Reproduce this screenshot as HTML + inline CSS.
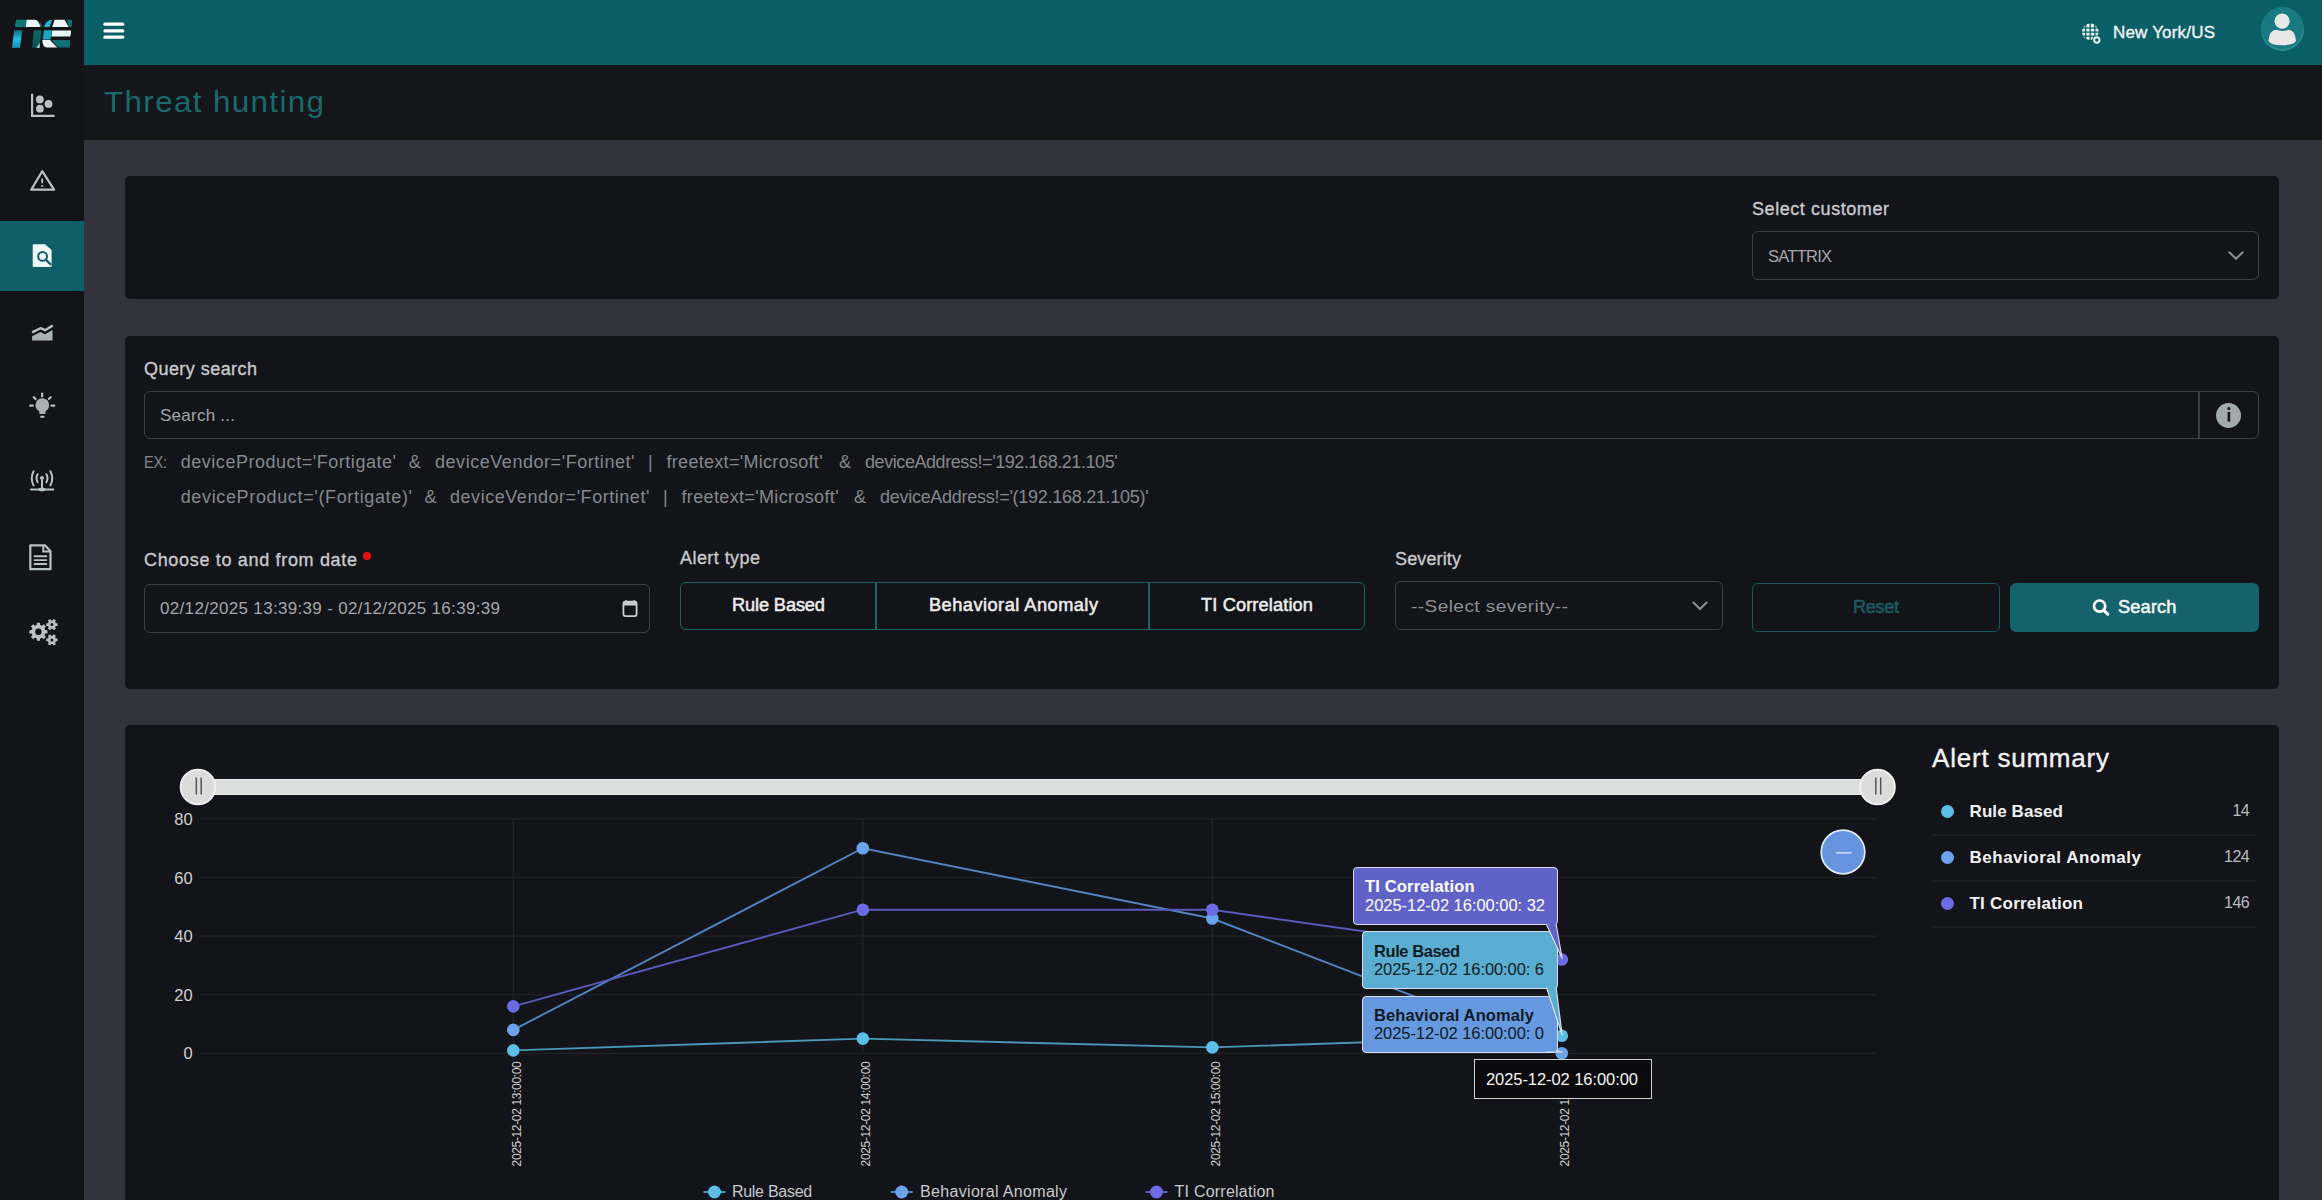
<!DOCTYPE html>
<html><head><meta charset="utf-8"><style>
html,body{margin:0;padding:0;width:2322px;height:1200px;overflow:hidden;background:#33333d;font-family:"Liberation Sans", sans-serif;}
.b{position:absolute;}
.t{position:absolute;white-space:pre;line-height:1;}
svg{position:absolute;left:0;top:0;}
</style></head><body>
<div class="b" style="left:0px;top:0px;width:84px;height:1200px;background:#131418"></div><div class="b" style="left:84px;top:0px;width:2238px;height:65px;background:#0a5f66"></div><div class="b" style="left:84px;top:65px;width:2238px;height:75px;background:#15161b"></div><div class="b" style="left:0px;top:221px;width:84px;height:70px;background:#0f5f68"></div><div class="b" style="left:125px;top:176px;width:2154px;height:123px;background:#131419;border-radius:5px"></div><div class="b" style="left:125px;top:336px;width:2154px;height:353px;background:#131419;border-radius:5px"></div><div class="b" style="left:125px;top:725px;width:2154px;height:495px;background:#131419;border-radius:5px"></div><div class="t" style="left:104px;top:88.05px;font-size:29px;color:#186a6b;letter-spacing:1.284px;transform:scaleX(1.08);transform-origin:0 0;">Threat hunting</div><div class="t" style="left:2113px;top:23.61px;font-size:17px;color:#f2f5f5;letter-spacing:0.183px;-webkit-text-stroke:0.35px currentColor;">New York/US</div><div class="b" style="left:2261px;top:8px;width:43px;height:43px;background:#2a8a90;border-radius:50%"></div><div class="t" style="left:1752px;top:199.76px;font-size:18px;color:#c8c9cb;letter-spacing:0.567px;-webkit-text-stroke:0.35px currentColor;">Select customer</div><div class="b" style="left:1752px;top:231px;width:507px;height:49px;border:1.5px solid #3b3e45;border-radius:6px;box-sizing:border-box"></div><div class="t" style="left:1768px;top:248.03px;font-size:16.5px;color:#a3a7ab;letter-spacing:-0.742px;">SATTRIX</div><div class="t" style="left:144px;top:359.76px;font-size:18px;color:#c8c9cb;letter-spacing:0.450px;-webkit-text-stroke:0.35px currentColor;">Query search</div><div class="b" style="left:144px;top:391px;width:2115px;height:48px;border:1.5px solid #3b3e45;border-radius:6px;box-sizing:border-box"></div><div class="b" style="left:2198px;top:391px;width:1.5px;height:48px;background:#3b3e45"></div><div class="t" style="left:160px;top:406.61px;font-size:17px;color:#a2a5a9;letter-spacing:0.248px;">Search ...</div><div class="b" style="left:2216px;top:403px;width:25px;height:25px;border-radius:50%;background:#a2aaae"></div><div class="t" style="left:144px;top:453.61px;font-size:17px;color:#85888c;letter-spacing:-0.331px;transform:scaleX(0.86);transform-origin:0 0;">EX:</div><div class="t" style="left:180.7px;top:452.76px;font-size:18px;color:#85888c;letter-spacing:0.534px;">deviceProduct='Fortigate'</div><div class="t" style="left:408.7px;top:452.76px;font-size:18px;color:#85888c;letter-spacing:1.684px;">&amp;</div><div class="t" style="left:435px;top:452.76px;font-size:18px;color:#85888c;letter-spacing:0.545px;">deviceVendor='Fortinet'</div><div class="t" style="left:648px;top:452.76px;font-size:18px;color:#85888c;">|</div><div class="t" style="left:666.5px;top:452.76px;font-size:18px;color:#85888c;letter-spacing:0.298px;">freetext='Microsoft'</div><div class="t" style="left:839px;top:452.76px;font-size:18px;color:#85888c;letter-spacing:-0.016px;">&amp;</div><div class="t" style="left:865px;top:452.76px;font-size:18px;color:#85888c;letter-spacing:-0.429px;">deviceAddress!='192.168.21.105'</div><div class="t" style="left:180.7px;top:487.76px;font-size:18px;color:#85888c;letter-spacing:0.647px;">deviceProduct='(Fortigate)'</div><div class="t" style="left:424.6px;top:487.76px;font-size:18px;color:#85888c;letter-spacing:0.384px;">&amp;</div><div class="t" style="left:450px;top:487.76px;font-size:18px;color:#85888c;letter-spacing:0.541px;">deviceVendor='Fortinet'</div><div class="t" style="left:663px;top:487.76px;font-size:18px;color:#85888c;">|</div><div class="t" style="left:681.5px;top:487.76px;font-size:18px;color:#85888c;letter-spacing:0.351px;">freetext='Microsoft'</div><div class="t" style="left:854px;top:487.76px;font-size:18px;color:#85888c;letter-spacing:-0.216px;">&amp;</div><div class="t" style="left:880px;top:487.76px;font-size:18px;color:#85888c;letter-spacing:-0.277px;">deviceAddress!='(192.168.21.105)'</div><div class="t" style="left:144px;top:550.76px;font-size:18px;color:#c8c9cb;letter-spacing:0.676px;-webkit-text-stroke:0.35px currentColor;">Choose to and from date</div><div class="b" style="left:363.2px;top:552.2px;width:7.4px;height:7.6px;border-radius:50%;background:#e50f12"></div><div class="b" style="left:144px;top:584px;width:506px;height:49px;border:1.5px solid #3b3e45;border-radius:6px;box-sizing:border-box"></div><div class="t" style="left:160px;top:600.11px;font-size:17px;color:#a3a7ab;letter-spacing:0.323px;">02/12/2025 13:39:39 - 02/12/2025 16:39:39</div><div class="t" style="left:680px;top:548.76px;font-size:18px;color:#c8c9cb;letter-spacing:0.439px;-webkit-text-stroke:0.35px currentColor;">Alert type</div><div class="b" style="left:680px;top:582px;width:685px;height:48px;border:1.5px solid #1a6366;border-radius:6px;box-sizing:border-box"></div><div class="b" style="left:875px;top:582px;width:1.5px;height:48px;background:#1a6366"></div><div class="b" style="left:1148px;top:582px;width:1.5px;height:48px;background:#1a6366"></div><div class="t" style="left:732px;top:597.19px;font-size:17.5px;color:#ececec;letter-spacing:-0.118px;transform:scaleX(1.04);transform-origin:0 0;-webkit-text-stroke:0.5px currentColor;">Rule Based</div><div class="t" style="left:929px;top:597.19px;font-size:17.5px;color:#ececec;letter-spacing:0.460px;transform:scaleX(1.04);transform-origin:0 0;-webkit-text-stroke:0.5px currentColor;">Behavioral Anomaly</div><div class="t" style="left:1201px;top:597.19px;font-size:17.5px;color:#ececec;letter-spacing:0.129px;transform:scaleX(1.04);transform-origin:0 0;-webkit-text-stroke:0.5px currentColor;">TI Correlation</div><div class="t" style="left:1395px;top:549.76px;font-size:18px;color:#c8c9cb;letter-spacing:0.138px;-webkit-text-stroke:0.35px currentColor;">Severity</div><div class="b" style="left:1395px;top:581px;width:328px;height:49px;border:1.5px solid #3b3e45;border-radius:6px;box-sizing:border-box"></div><div class="t" style="left:1411px;top:597.61px;font-size:17px;color:#8c9094;letter-spacing:0.388px;transform:scaleX(1.12);transform-origin:0 0;">--Select severity--</div><div class="b" style="left:1752px;top:583px;width:248px;height:49px;border:1.5px solid #17585c;border-radius:6px;box-sizing:border-box"></div><div class="t" style="left:1853px;top:598.69px;font-size:17.5px;color:#1a5c62;letter-spacing:-0.372px;transform:scaleX(1.04);transform-origin:0 0;-webkit-text-stroke:0.5px currentColor;">Reset</div><div class="b" style="left:2010px;top:583px;width:249px;height:49px;background:#14636c;border-radius:6px"></div><div class="t" style="left:2118px;top:598.69px;font-size:17.5px;color:#f5f7f7;letter-spacing:0.159px;transform:scaleX(1.04);transform-origin:0 0;-webkit-text-stroke:0.5px currentColor;">Search</div><div class="t" style="left:1932px;top:744.99px;font-size:26px;color:#f3f3f3;letter-spacing:0.785px;-webkit-text-stroke:0.35px currentColor;">Alert summary</div><svg width="2322" height="1200" viewBox="0 0 2322 1200"><line x1="199.5" y1="818.9" x2="1876" y2="818.9" stroke="#212227" stroke-width="1.2"/><line x1="199.5" y1="877.5" x2="1876" y2="877.5" stroke="#212227" stroke-width="1.2"/><line x1="199.5" y1="936.1" x2="1876" y2="936.1" stroke="#212227" stroke-width="1.2"/><line x1="199.5" y1="994.7" x2="1876" y2="994.7" stroke="#212227" stroke-width="1.2"/><line x1="199.5" y1="1053.3" x2="1876" y2="1053.3" stroke="#212227" stroke-width="1.2"/><line x1="513.3" y1="818.9" x2="513.3" y2="1053.3" stroke="#232428" stroke-width="1.2"/><line x1="862.8" y1="818.9" x2="862.8" y2="1053.3" stroke="#232428" stroke-width="1.2"/><line x1="1212.3" y1="818.9" x2="1212.3" y2="1053.3" stroke="#232428" stroke-width="1.2"/><rect x="198" y="779.5" width="1679" height="15" fill="#dcdddd" stroke="#ececec" stroke-width="1"/><circle cx="198" cy="787" r="17.4" fill="#dcdcdc" stroke="#f2f2f2" stroke-width="1.8"/><line x1="196.3" y1="777.5" x2="196.3" y2="794.5" stroke="#555" stroke-width="1.5"/><line x1="201.2" y1="777.5" x2="201.2" y2="794.5" stroke="#555" stroke-width="1.5"/><circle cx="1877.5" cy="787" r="17.4" fill="#dcdcdc" stroke="#f2f2f2" stroke-width="1.8"/><line x1="1875.8" y1="777.5" x2="1875.8" y2="794.5" stroke="#555" stroke-width="1.5"/><line x1="1880.7" y1="777.5" x2="1880.7" y2="794.5" stroke="#555" stroke-width="1.5"/><polyline points="513.3,1050.4 862.8,1038.6 1212.3,1047.4 1561.8,1035.7" fill="none" stroke="#4a96b6" stroke-width="1.9"/><polyline points="513.3,1029.9 862.8,848.2 1212.3,918.5 1561.8,1053.3" fill="none" stroke="#5282c0" stroke-width="1.9"/><polyline points="513.3,1006.4 862.8,909.7 1212.3,909.7 1561.8,959.5" fill="none" stroke="#5a5abc" stroke-width="1.9"/><circle cx="513.3" cy="1050.4" r="6.3" fill="#5cbde6"/><circle cx="862.8" cy="1038.6" r="6.3" fill="#5cbde6"/><circle cx="1212.3" cy="1047.4" r="6.3" fill="#5cbde6"/><circle cx="1561.8" cy="1035.7" r="6.3" fill="#5cbde6"/><circle cx="513.3" cy="1029.9" r="6.3" fill="#6aa2ec"/><circle cx="862.8" cy="848.2" r="6.3" fill="#6aa2ec"/><circle cx="1212.3" cy="918.5" r="6.3" fill="#6aa2ec"/><circle cx="1561.8" cy="1053.3" r="6.3" fill="#6aa2ec"/><circle cx="513.3" cy="1006.4" r="6.3" fill="#6b6be4"/><circle cx="862.8" cy="909.7" r="6.3" fill="#6b6be4"/><circle cx="1212.3" cy="909.7" r="6.3" fill="#6b6be4"/><circle cx="1561.8" cy="959.5" r="6.3" fill="#6b6be4"/><circle cx="1843" cy="852" r="21.8" fill="#6794de" stroke="#e4ecfb" stroke-width="1.7"/><line x1="1836" y1="852.8" x2="1851.5" y2="852.8" stroke="#c8dcff" stroke-width="1.6"/><line x1="703.5" y1="1192" x2="725.5" y2="1192" stroke="#4a96b6" stroke-width="2"/><circle cx="714.5" cy="1192" r="6.5" fill="#5cbde6"/><line x1="890.7" y1="1192" x2="912.7" y2="1192" stroke="#5282c0" stroke-width="2"/><circle cx="901.7" cy="1192" r="6.5" fill="#6aa2ec"/><line x1="1145.5" y1="1192" x2="1167.5" y2="1192" stroke="#5a5abc" stroke-width="2"/><circle cx="1156.5" cy="1192" r="6.5" fill="#6b6be4"/></svg><div class="t" style="right:2129.3px;top:810.93px;font-size:16.5px;color:#cfd0d2;">80</div><div class="t" style="right:2129.3px;top:869.53px;font-size:16.5px;color:#cfd0d2;">60</div><div class="t" style="right:2129.3px;top:928.13px;font-size:16.5px;color:#cfd0d2;">40</div><div class="t" style="right:2129.3px;top:986.73px;font-size:16.5px;color:#cfd0d2;">20</div><div class="t" style="right:2129.3px;top:1045.33px;font-size:16.5px;color:#cfd0d2;">0</div><div class="t" style="left:456.79999999999995px;top:1107.7px;width:120px;height:12px;font-size:12px;color:#d0d0d0;text-align:center;transform:rotate(-90deg);letter-spacing:-0.35px">2025-12-02 13:00:00</div><div class="t" style="left:806.3px;top:1107.7px;width:120px;height:12px;font-size:12px;color:#d0d0d0;text-align:center;transform:rotate(-90deg);letter-spacing:-0.35px">2025-12-02 14:00:00</div><div class="t" style="left:1155.8px;top:1107.7px;width:120px;height:12px;font-size:12px;color:#d0d0d0;text-align:center;transform:rotate(-90deg);letter-spacing:-0.35px">2025-12-02 15:00:00</div><div class="t" style="left:1505.3px;top:1107.7px;width:120px;height:12px;font-size:12px;color:#d0d0d0;text-align:center;transform:rotate(-90deg);letter-spacing:-0.35px">2025-12-02 16:00:00</div><div class="t" style="left:731.9px;top:1184.46px;font-size:16px;color:#c8c9cb;letter-spacing:-0.269px;">Rule Based</div><div class="t" style="left:920px;top:1184.46px;font-size:16px;color:#c8c9cb;letter-spacing:0.328px;">Behavioral Anomaly</div><div class="t" style="left:1174.5px;top:1184.46px;font-size:16px;color:#c8c9cb;letter-spacing:0.237px;">TI Correlation</div><div class="b" style="left:1352.5px;top:866.5px;width:205.0px;height:58.5px;background:#6162c8;border:1.5px solid #dcdcf0;border-radius:4px;box-sizing:border-box"></div><div class="t" style="left:1365.0px;top:878.03px;font-size:16.5px;color:#ffffff;font-weight:bold;letter-spacing:0.172px;">TI Correlation</div><div class="t" style="left:1365.0px;top:897.03px;font-size:16.5px;color:#ffffff;letter-spacing:-0.034px;">2025-12-02 16:00:00: 32</div><div class="b" style="left:1361.5px;top:931px;width:196.0px;height:57.5px;background:#5aaed2;border:1.5px solid #dcdcf0;border-radius:4px;box-sizing:border-box"></div><div class="t" style="left:1374.0px;top:943.03px;font-size:16.5px;color:#0d1a24;font-weight:bold;letter-spacing:-0.431px;">Rule Based</div><div class="t" style="left:1374.0px;top:961.03px;font-size:16.5px;color:#0d1a24;letter-spacing:-0.074px;">2025-12-02 16:00:00: 6</div><div class="b" style="left:1361.5px;top:995.5px;width:196.0px;height:57.0px;background:#6698e0;border:1.5px solid #dcdcf0;border-radius:4px;box-sizing:border-box"></div><div class="t" style="left:1374.0px;top:1007.03px;font-size:16.5px;color:#0d1a24;font-weight:bold;letter-spacing:0.116px;">Behavioral Anomaly</div><div class="t" style="left:1374.0px;top:1025.03px;font-size:16.5px;color:#0d1a24;letter-spacing:-0.074px;">2025-12-02 16:00:00: 0</div><div class="b" style="left:1473.5px;top:1058.5px;width:178.0px;height:40.5px;background:#0b0b0d;border:1.5px solid #d0d0d0;box-sizing:border-box"></div><div class="t" style="left:1486px;top:1071.03px;font-size:16.5px;color:#f5f5f5;letter-spacing:-0.068px;">2025-12-02 16:00:00</div><div class="b" style="left:1940.5px;top:804.5px;width:13px;height:13px;border-radius:50%;background:#5cbde6"></div><div class="t" style="left:1969.5px;top:802.61px;font-size:17px;color:#f2f2f2;font-weight:bold;letter-spacing:0.101px;">Rule Based</div><div class="t" style="right:73px;top:803.46px;font-size:16px;color:#b9bbbe;letter-spacing:-0.600px;">14</div><div class="b" style="left:1933px;top:834px;width:323px;height:1.5px;background:#1e1f24"></div><div class="b" style="left:1940.5px;top:850.5px;width:13px;height:13px;border-radius:50%;background:#6aa2ec"></div><div class="t" style="left:1969.5px;top:848.61px;font-size:17px;color:#f2f2f2;font-weight:bold;letter-spacing:0.511px;">Behavioral Anomaly</div><div class="t" style="right:73px;top:849.46px;font-size:16px;color:#b9bbbe;letter-spacing:-0.600px;">124</div><div class="b" style="left:1933px;top:880px;width:323px;height:1.5px;background:#1e1f24"></div><div class="b" style="left:1940.5px;top:896.5px;width:13px;height:13px;border-radius:50%;background:#6b6be4"></div><div class="t" style="left:1969.5px;top:894.61px;font-size:17px;color:#f2f2f2;font-weight:bold;letter-spacing:0.230px;">TI Correlation</div><div class="t" style="right:73px;top:895.46px;font-size:16px;color:#b9bbbe;letter-spacing:-0.600px;">146</div><div class="b" style="left:1933px;top:926px;width:323px;height:1.5px;background:#1e1f24"></div><svg width="2322" height="1200" viewBox="0 0 2322 1200"><path d="M32.1 94.6 V115.9 H53.7" fill="none" stroke="#b9c0c6" stroke-width="2.2" stroke-linecap="round"/><circle cx="39.8" cy="99.4" r="3.9" fill="#b9c0c6"/><circle cx="39.9" cy="108.7" r="3.9" fill="#b9c0c6"/><circle cx="48.5" cy="103.9" r="3.9" fill="#b9c0c6"/><path d="M42.2 171.2 L31.2 189.7 H54.1 Z" fill="none" stroke="#b9c0c6" stroke-width="2.2" stroke-linejoin="round"/><line x1="42.2" y1="178.6" x2="42.2" y2="183.2" stroke="#b9c0c6" stroke-width="1.9"/><circle cx="42.2" cy="186" r="1.1" fill="#b9c0c6"/><path d="M33.5 244.3 H45 L51.6 250 V266 Q51.6 267.1 50.5 267.1 H33.8 Q32.7 267.1 32.7 266 V245.4 Q32.7 244.3 33.8 244.3 Z" fill="#eef8f7"/><circle cx="42.6" cy="256.4" r="4.4" fill="none" stroke="#0f5f66" stroke-width="2"/><line x1="45.8" y1="259.6" x2="50.5" y2="264.3" stroke="#0f5f66" stroke-width="2.2" stroke-linecap="round"/><polyline points="32.1,332.4 40.5,328.2 45,330.2 52.8,325.5" fill="none" stroke="#b9c0c6" stroke-width="2.4" stroke-linejoin="round"/><path d="M32.1 336.2 L40.5 332 L45 334.2 L52.5 330 V340.5 H32.1 Z" fill="#a9b3b7"/><circle cx="42.3" cy="405.1" r="6.9" fill="#a8b0b6"/><rect x="39.3" y="410" width="6.2" height="4" fill="#a8b0b6"/><rect x="40.2" y="415.8" width="4.3" height="2" rx="0.8" fill="#b9c0c6"/><line x1="42.1" y1="393.5" x2="42.1" y2="396.5" stroke="#b9c0c6" stroke-width="2.2" stroke-linecap="round"/><line x1="33.8" y1="397.2" x2="35.6" y2="399" stroke="#b9c0c6" stroke-width="2.2" stroke-linecap="round"/><line x1="50.6" y1="397.2" x2="48.8" y2="399" stroke="#b9c0c6" stroke-width="2.2" stroke-linecap="round"/><line x1="30.2" y1="405.7" x2="32.8" y2="405.7" stroke="#b9c0c6" stroke-width="2.2" stroke-linecap="round"/><line x1="54.2" y1="405.7" x2="51.6" y2="405.7" stroke="#b9c0c6" stroke-width="2.2" stroke-linecap="round"/><circle cx="42" cy="478" r="2" fill="#b9c0c6"/><path d="M37.6 474.2 Q35.4 478.2 37.6 482.2 M46.4 474.2 Q48.6 478.2 46.4 482.2" fill="none" stroke="#b9c0c6" stroke-width="2" stroke-linecap="round"/><path d="M33.6 471.2 Q29.8 478.2 33.6 485.4 M50.4 471.2 Q54.2 478.2 50.4 485.4" fill="none" stroke="#b9c0c6" stroke-width="2" stroke-linecap="round"/><line x1="42" y1="480" x2="42" y2="488.5" stroke="#b9c0c6" stroke-width="2"/><line x1="31" y1="489.6" x2="53.3" y2="489.6" stroke="#b9c0c6" stroke-width="2" stroke-linecap="round"/><ellipse cx="42" cy="489.4" rx="3.5" ry="1.8" fill="#b9c0c6"/><path d="M30.3 545.3 H45 L50.5 551.2 V569.2 H30.3 Z" fill="none" stroke="#b9c0c6" stroke-width="2.2" stroke-linejoin="round"/><path d="M43.3 545.3 V551.6 H50.5" fill="none" stroke="#b9c0c6" stroke-width="2"/><line x1="34.5" y1="556.2" x2="46.3" y2="556.2" stroke="#b9c0c6" stroke-width="1.9" stroke-linecap="round"/><line x1="34.5" y1="560.1" x2="46.3" y2="560.1" stroke="#b9c0c6" stroke-width="1.9" stroke-linecap="round"/><line x1="34.5" y1="564" x2="46.3" y2="564" stroke="#b9c0c6" stroke-width="1.9" stroke-linecap="round"/><path d="M47.46,630.22 L47.46,633.38 L45.18,633.54 L44.43,635.36 L45.93,637.09 L43.69,639.33 L41.96,637.83 L40.14,638.58 L39.98,640.86 L36.82,640.86 L36.66,638.58 L34.84,637.83 L33.11,639.33 L30.87,637.09 L32.37,635.36 L31.62,633.54 L29.34,633.38 L29.34,630.22 L31.62,630.06 L32.37,628.24 L30.87,626.51 L33.11,624.27 L34.84,625.77 L36.66,625.02 L36.82,622.74 L39.98,622.74 L40.14,625.02 L41.96,625.77 L43.69,624.27 L45.93,626.51 L44.43,628.24 L45.18,630.06 Z M41.6,631.8 A3.2,3.2 0 1 0 35.199999999999996,631.8 A3.2,3.2 0 1 0 41.6,631.8 Z" fill="#b9c0c6" fill-rule="evenodd"/><path d="M57.55,623.28 L57.55,625.92 L55.87,625.98 L55.08,627.34 L55.87,628.83 L53.58,630.15 L52.69,628.73 L51.11,628.73 L50.22,630.15 L47.93,628.83 L48.72,627.34 L47.93,625.98 L46.25,625.92 L46.25,623.28 L47.93,623.22 L48.72,621.86 L47.93,620.37 L50.22,619.05 L51.11,620.47 L52.69,620.47 L53.58,619.05 L55.87,620.37 L55.08,621.86 L55.87,623.22 Z M53.4,624.6 A1.5,1.5 0 1 0 50.4,624.6 A1.5,1.5 0 1 0 53.4,624.6 Z" fill="#b9c0c6" fill-rule="evenodd"/><path d="M57.55,638.58 L57.55,641.22 L55.87,641.28 L55.08,642.64 L55.87,644.13 L53.58,645.45 L52.69,644.03 L51.11,644.03 L50.22,645.45 L47.93,644.13 L48.72,642.64 L47.93,641.28 L46.25,641.22 L46.25,638.58 L47.93,638.52 L48.72,637.16 L47.93,635.67 L50.22,634.35 L51.11,635.77 L52.69,635.77 L53.58,634.35 L55.87,635.67 L55.08,637.16 L55.87,638.52 Z M53.4,639.9 A1.5,1.5 0 1 0 50.4,639.9 A1.5,1.5 0 1 0 53.4,639.9 Z" fill="#b9c0c6" fill-rule="evenodd"/><line x1="105" y1="24.2" x2="122.7" y2="24.2" stroke="#ffffff" stroke-width="3.3" stroke-linecap="round"/><line x1="105" y1="30.9" x2="122.7" y2="30.9" stroke="#ffffff" stroke-width="3.3" stroke-linecap="round"/><line x1="105" y1="37.2" x2="122.7" y2="37.2" stroke="#ffffff" stroke-width="3.3" stroke-linecap="round"/><circle cx="2090.3" cy="31.8" r="8.3" fill="#e6f4f4"/><line x1="2085.7" y1="22" x2="2085.7" y2="42" stroke="#0a5f66" stroke-width="1.3"/><line x1="2090.2" y1="22" x2="2090.2" y2="42" stroke="#0a5f66" stroke-width="1.3"/><line x1="2094.8" y1="22" x2="2094.8" y2="42" stroke="#0a5f66" stroke-width="1.3"/><line x1="2080" y1="28.0" x2="2101" y2="28.0" stroke="#0a5f66" stroke-width="1.3"/><line x1="2080" y1="32.1" x2="2101" y2="32.1" stroke="#0a5f66" stroke-width="1.3"/><line x1="2080" y1="36.2" x2="2101" y2="36.2" stroke="#0a5f66" stroke-width="1.3"/><circle cx="2096.8" cy="40" r="4.6" fill="#0a5f66"/><circle cx="2096.8" cy="40" r="2.7" fill="none" stroke="#e6f4f4" stroke-width="1.9"/><circle cx="2282.4" cy="27.8" r="21" fill="#1a7a81"/><circle cx="2282.1" cy="21.2" r="7.6" fill="#e8e8e8"/><path d="M2268.5 41 Q2269 30.5 2276 29.8 Q2282 32 2288.5 29.8 Q2295.5 30.5 2296 41 Q2294 45.2 2282.2 45.2 Q2270.5 45.2 2268.5 41 Z" fill="#e8e8e8"/><polyline points="2229.3,252.2 2236,258.8 2242.7,252.2" fill="none" stroke="#8e9296" stroke-width="2" stroke-linecap="round" stroke-linejoin="round"/><polyline points="1693.5,602.5 1700,609 1706.5,602.5" fill="none" stroke="#8e9296" stroke-width="2" stroke-linecap="round" stroke-linejoin="round"/><rect x="623.4" y="601.7" width="13.2" height="14.4" rx="2" fill="none" stroke="#c8cbd0" stroke-width="1.8"/><rect x="623.4" y="601.7" width="13.2" height="3.8" fill="#c8cbd0"/><rect x="625" y="600.3" width="1.8" height="2" fill="#c8cbd0"/><rect x="633.3" y="600.3" width="1.8" height="2" fill="#c8cbd0"/><circle cx="2099.6" cy="606.1" r="5.6" fill="none" stroke="#ffffff" stroke-width="2.7"/><line x1="2103.8" y1="610.4" x2="2107.8" y2="614.2" stroke="#ffffff" stroke-width="3" stroke-linecap="round"/><rect x="2227.6" y="412" width="2.6" height="9.6" fill="#15161b"/><circle cx="2228.9" cy="408.6" r="1.5" fill="#15161b"/></svg><svg width="2322" height="1200" viewBox="0 0 2322 1200"><defs><linearGradient id="lc" x1="0" y1="0" x2="0" y2="1"><stop offset="0" stop-color="#0f6f80"/><stop offset="0.5" stop-color="#22c0dc"/><stop offset="1" stop-color="#1490b8"/></linearGradient><linearGradient id="ld" x1="0" y1="0" x2="0" y2="1"><stop offset="0" stop-color="#0c6a66"/><stop offset="1" stop-color="#0a4f55"/></linearGradient></defs><path d="M16 19.8 H26.5 L25.6 27 H14.9 Z" fill="#0d7775"/><path d="M26.6 19.8 H35 Q39 20 40.2 27 H25.7 Z" fill="#eaf7f6"/><path d="M40.5 22 Q41.5 24 42 27 H40.4 Z" fill="#1e8f96"/><path d="M45.8 23 Q48 20 52.3 19.8 L49.5 27 H43.8 Z" fill="#26b4cc"/><path d="M54.6 19.8 H64.5 L68.8 27 H52.2 Z" fill="#eaf7f6"/><path d="M66.5 19.8 H72.2 L71.8 27 H69.3 Z" fill="#0f6e6c"/><path d="M14.3 30.2 H22.3 L19.9 47.7 H11.9 Z" fill="url(#lc)"/><path d="M33.9 30.2 H41.6 L39.5 47.7 H32.1 Z" fill="url(#ld)"/><path d="M36.5 47.7 L39.8 43 L39.5 47.7 Z" fill="#cfe9e8"/><path d="M44 30.2 H51.8 L50.5 39.5 H42.6 Z" fill="#1aaac4"/><path d="M52.2 30.4 H71.2 L70.4 36.4 H51.4 Z" fill="#e6f6f5"/><path d="M42.4 40 H50 L57.2 47.6 H47 Q42.2 47.2 42.4 40 Z" fill="#edf6f6"/><path d="M51.5 40 H70.3 L69.9 47.4 H58 Z" fill="#0e6f74"/></svg><svg width="2322" height="1200" viewBox="0 0 2322 1200"><path d="M1546.5 924.5 L1562.2 958.6 L1556 923.5" fill="#6162c8" stroke="#e2e4ee" stroke-width="1.1" stroke-linejoin="round"/><rect x="1547" y="920.5" width="9" height="4" fill="#6162c8"/><path d="M1546.5 987.5 L1562.2 1035.4 L1556 986.5" fill="#5aaed2" stroke="#e2e4ee" stroke-width="1.1" stroke-linejoin="round"/><rect x="1547" y="983.5" width="9" height="4" fill="#5aaed2"/><path d="M1546.5 1051.5 L1562.2 1052 L1556 1050.5" fill="#6698e0" stroke="#e2e4ee" stroke-width="1.1" stroke-linejoin="round"/><rect x="1547" y="1047.5" width="9" height="4" fill="#6698e0"/></svg>
</body></html>
